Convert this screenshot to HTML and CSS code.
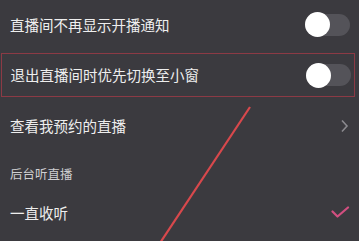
FILE: index.html
```html
<!DOCTYPE html>
<html lang="zh">
<head>
<meta charset="utf-8">
<link rel="stylesheet" href="styles.css">
</head>
<body>
<div class="page">
  <div class="row row-first">
    <span class="text">直播间不再显示开播通知</span>
    <span class="toggle"><span class="knob"></span></span>
  </div>
  <div class="row-wrap">
    <div class="row boxed">
      <span class="text">退出直播间时优先切换至小窗</span>
      <span class="toggle"><span class="knob"></span></span>
    </div>
  </div>
  <div class="row row-link">
    <span class="text">查看我预约的直播</span>
    <svg class="chev" width="9" height="14" viewBox="0 0 9 14"><polyline points="2,1.5 7,7 2,12.5" fill="none" stroke="#8b8a8f" stroke-width="1.6"/></svg>
  </div>
  <div class="row row-label">
    <span class="label">后台听直播</span>
  </div>
  <div class="row row-opt">
    <span class="text">一直收听</span>
    <svg class="check" width="19" height="13" viewBox="0 0 19 13"><polyline points="1.5,5.5 6.5,10.5 17,1.5" fill="none" stroke="#d24f80" stroke-width="2.2" stroke-linecap="round" stroke-linejoin="round"/></svg>
  </div>
  <svg class="arrow" width="359" height="241" viewBox="0 0 359 241">
    <line x1="250" y1="107" x2="160" y2="243" stroke="#d8484c" stroke-width="2.2"/>
  </svg>
</div>
</body>
</html>
```
FILE: styles.css
```css
html, body {
  margin: 0;
  padding: 0;
  background: #3b3a3f;
}
.page {
  position: relative;
  width: 359px;
  height: 241px;
  overflow: hidden;
  background: #3b3a3f;
  font-family: "Noto Sans CJK SC", "Noto Sans", sans-serif;
  color: #eeeeee;
}
.row {
  display: flex;
  align-items: center;
  justify-content: space-between;
  box-sizing: border-box;
  padding-left: 10px;
}
.text {
  font-size: 14.5px;
  line-height: 20px;
}
.row-first {
  height: 49px;
  padding-right: 9px;
}
.row-wrap {
  height: 51px;
  box-sizing: border-box;
  padding: 4px 4px 0 1px;
}
.boxed {
  height: 44px;
  border: 1.5px solid #8c3a45;
  padding-left: 8.5px;
  padding-right: 3.5px;
}
.toggle {
  position: relative;
  width: 45px;
  height: 22px;
  border-radius: 11px;
  background: #545359;
}
.knob {
  position: absolute;
  left: 0;
  top: -1.5px;
  width: 25px;
  height: 25px;
  border-radius: 50%;
  background: #ffffff;
}
.row-link {
  height: 52px;
  padding-right: 10px;
}
.row-label {
  height: 43px;
}
.label {
  font-size: 12.5px;
  line-height: 18px;
  color: #cfcfd1;
}
.row-opt {
  height: 36px;
  padding-right: 9px;
}
.check {
  display: block;
  margin-top: -2px;
}
.arrow {
  position: absolute;
  left: 0;
  top: 0;
  pointer-events: none;
}
```
